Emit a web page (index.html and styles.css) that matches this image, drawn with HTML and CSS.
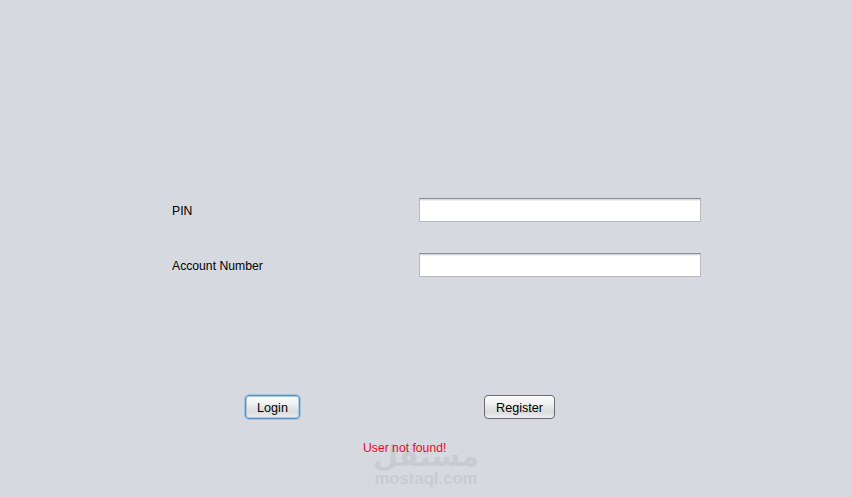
FILE: index.html
```html
<!DOCTYPE html>
<html lang="en">

<head>
  <meta charset="UTF-8">
  <meta name="viewport" content="width=device-width, initial-scale=1.0">
  <title>Login</title>
  <link rel="stylesheet" href="styles.css">
</head>

<body>
  <main class="login-panel">
    <div class="form-row">
      <label class="field-label" for="pin">PIN</label>
      <input class="text-field" type="text" id="pin">
    </div>
    <div class="form-row">
      <label class="field-label" for="accountNumber">Account Number</label>
      <input class="text-field" type="text" id="accountNumber">
    </div>
    <div class="button-row">
      <button class="btn btn-login" id="loginButton">Login</button>
      <button class="btn btn-register" id="registerButton">Register</button>
    </div>
    <p class="error-text">User not found!</p>
  </main>
  <div class="watermark">
    <span class="watermark-ar" dir="rtl" lang="ar">مستقل</span>
    <span class="watermark-en">mostaql.com</span>
  </div>
</body>

</html>
```

FILE: styles.css
```css
/* page */
body {
  margin: 0;
  height: 497px;
  overflow: hidden;
  position: relative;
  background-color: #d6d9e0;
  color: #000;
  font-family: "Liberation Sans", Arial, sans-serif;
  font-size: 12.2px;
}

.login-panel {
  padding: 198px 0 0 172px;
}

/* label + input rows */
.form-row {
  display: flex;
  align-items: center;
  height: 24px;
  margin-bottom: 31px;
}

.field-label {
  width: 247px;
  padding-top: 1px;
  box-sizing: border-box;
}

.text-field {
  width: 282px;
  height: 24px;
  box-sizing: border-box;
  margin: 0;
  padding: 0 4px;
  background-color: #fff;
  border: 1px solid #b8b9bb;
  border-top-color: #8a8c8e;
  box-shadow: inset 0 1px 0 #d9dadc, inset 0 2px 0 #f0f0f2;
  outline: none;
}

/* buttons */
.button-row {
  display: flex;
  margin-top: 118px;
  padding-left: 73px;
}

.btn {
  height: 24px;
  box-sizing: border-box;
  margin: 0;
  padding: 2px 0 0;
  font-family: inherit;
  font-size: 12.6px;
  color: #000;
  border: 1px solid #6a6b70;
  border-radius: 4px;
  background: linear-gradient(#fcfcfd 0%, #f1f1f3 35%, #d9dadd 72%, #f0f0f2 100%);
}

.btn-login {
  width: 55px;
  margin-right: 184px;
  border-color: #5d8fbd;
  box-shadow: 0 0 0 1px #a3c3de, inset 0 0 0 1px #a9c8e2;
}

.btn-register {
  width: 71px;
}

.error-text {
  margin: 22px 0 0 191px;
  line-height: 14px;
  color: #ff0022;
}

/* site watermark over the screenshot */
.watermark {
  position: absolute;
  left: 360px;
  top: 440px;
  width: 132px;
  display: flex;
  flex-direction: column;
  align-items: center;
  color: #000;
  opacity: 0.06;
  font-weight: bold;
  pointer-events: none;
}

.watermark-ar {
  font-family: "DejaVu Sans", sans-serif;
  font-size: 29px;
  line-height: 32px;
}

.watermark-en {
  font-size: 16.7px;
  line-height: 17px;
  margin-top: -2px;
}
```
